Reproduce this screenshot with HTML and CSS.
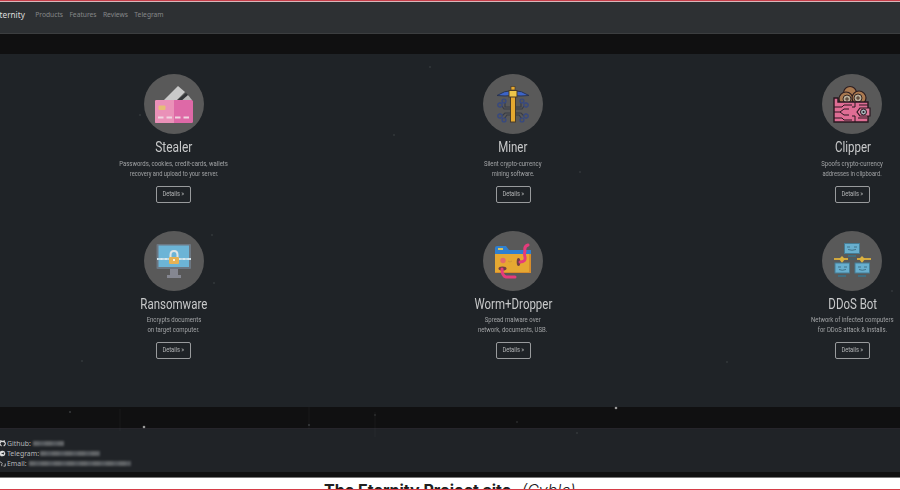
FILE: index.html
```html
<!DOCTYPE html>
<html lang="en">
<head>
<meta charset="utf-8">
<title>Eternity</title>
<link rel="stylesheet" href="styles.css">
</head>
<body>
<div class="frame">
  <nav class="nav"><b class="brand">Eternity</b><a>Products</a><a>Features</a><a>Reviews</a><a>Telegram</a></nav>
  <main class="products">
    <article class="card">
      <svg class="icon" viewBox="0 0 60 60"><circle cx="30" cy="30" r="30"/>
        <path fill="#c9c9c9" d="M18 28 34 12 41 18 31 28z"/><path fill="#333538" d="M31 28 42 19 45 22 39 28z"/><path fill="#b8b8b8" d="M36 28 44 21 48 26 46 28z"/>
        <rect x="11" y="26" width="38" height="23" rx="1.5" fill="#de69a7"/><path fill="#ea91b8" d="M12 26h18v23H12q-1 0-1-1V27z"/>
        <rect x="14.500" y="31.500" width="7" height="4.500" rx="1" fill="#e6bd77"/><path stroke="#f0d4df" stroke-width="1.800" stroke-dasharray="5.500 3" d="M14 43.500h32"/></svg>
      <h2><span class="wide">Stealer</span></h2>
      <p><span class="wide">Passwords, cookies, credit-cards, wallets</span><span>recovery and upload to your server.</span></p>
      <a class="btn"><span>Details »</span></a>
    </article>
    <article class="card">
      <svg class="icon" viewBox="0 0 60 60"><circle cx="30" cy="30" r="30"/>
        <g fill="none" stroke="#383c46" stroke-width="1.200"><path d="M28 33h-6v-4M28 35h-7l-2-3M28 39h-6l-3 3M28 41h-4l-3 4M32 33h6v-4M32 35h7l2-3M32 39h6l3 3M32 41h4l3 4"/></g>
        <g fill="#555" stroke="#354883" stroke-width="1.200"><circle cx="21" cy="27" r="2"/><circle cx="17" cy="31" r="2.200"/><circle cx="17" cy="42" r="2.200"/><circle cx="21" cy="46" r="2"/><circle cx="39" cy="27" r="2"/><circle cx="43" cy="31" r="2.200"/><circle cx="43" cy="42" r="2.200"/><circle cx="39" cy="46" r="2"/></g>
        <path fill="#3c64c8" stroke="#29334f" d="M14 21.500q7-5 16-5t16 5q-8 1-16 0-8 1-16 0z"/>
        <rect x="27.500" y="20" width="5" height="28" fill="#e6a92f" stroke="#493b28"/><rect x="26" y="16.500" width="8" height="6.500" fill="#edc64a" stroke="#493b28"/><rect x="28" y="12.500" width="4" height="3.500" fill="#e6a92f" stroke="#493b28" stroke-width=".7"/></svg>
      <h2><span>Miner</span></h2>
      <p><span class="wide">Silent crypto-currency</span><span>mining software.</span></p>
      <a class="btn"><span>Details »</span></a>
    </article>
    <article class="card">
      <svg class="icon" viewBox="0 0 60 60"><circle cx="30" cy="30" r="30"/>
        <g fill="#a97950" stroke="#2b1c1e" stroke-width="1.200"><circle cx="28" cy="19" r="6.500"/><circle cx="24" cy="25" r="7"/><circle cx="37" cy="24" r="7"/></g><g fill="#b8ad98" stroke="#392923"><circle cx="25" cy="25" r="4"/><circle cx="36" cy="24" r="4"/></g><path stroke="#4b3227" d="M23 25h4M25 23v4M34 24h4M36 22v4"/>
        <path fill="#df6d94" stroke="#28171f" stroke-width="1.400" d="M12 24h4v4h30v20H12z"/>
        <path fill="none" stroke="#28171f" stroke-width="1" d="M12 33h8l2-2h8M12 38h6M12 44h8l2 2h8M18 38l4-3h5M18 38l4 3h5M33 28v5h-3M33 48v-6h-3M37 31h9M36 44h9"/><path fill="#e17c9f" stroke="#28171f" stroke-width="1.200" d="M35 38l3-4h10v8H38z"/><circle cx="41.500" cy="38" r="3" fill="#a6b5bb" stroke="#28171f"/><circle cx="41.500" cy="38" r="1" fill="#28171f"/></svg>
      <h2><span>Clipper</span></h2>
      <p><span class="wide">Spoofs crypto-currency</span><span>addresses in clipboard.</span></p>
      <a class="btn"><span>Details »</span></a>
    </article>
    <article class="card">
      <svg class="icon" viewBox="0 0 60 60"><circle cx="30" cy="30" r="30"/>
        <path fill="#858791" d="M26 37h8v7h3v3H23v-3h3z"/><rect x="12.500" y="13" width="34.500" height="25" rx="1" fill="#6c7782"/><rect x="14.500" y="14.500" width="30.500" height="21.500" fill="#6cb4d6"/>
        <path stroke="#d6e8ef" stroke-width="1.800" d="M13 28h34"/><path stroke="#83b9d1" stroke-width=".6" stroke-dasharray="2.500 2" d="M14 28h32"/><path fill="none" stroke="#dde4e6" stroke-width="2" d="M26.500 27v-3q0-4 3.500-4t3.500 4v3"/><rect x="25" y="26" width="10" height="7" rx="1" fill="#e5b254"/><circle cx="30" cy="29" r="1" fill="#fff"/></svg>
      <h2><span>Ransomware</span></h2>
      <p><span class="wide">Encrypts documents</span><span class="wide">on target computer.</span></p>
      <a class="btn"><span>Details »</span></a>
    </article>
    <article class="card">
      <svg class="icon" viewBox="0 0 60 60"><circle cx="30" cy="30" r="30"/>
        <path fill="#2f7fcf" d="M12 17q0-2 2-2h9l3 4h22v7H12z"/><path fill="#e6a832" d="M12 23h36v19H12z"/><path fill="#d78d2c" d="M46 23h2v19H12v-1h34z"/><rect x="15" y="17" width="5" height="2" fill="#d9c35c"/>
        <circle cx="20" cy="29.500" r="2.700" fill="#e46b68"/><path fill="none" stroke="#cf9838" d="M25 30q2 2 4 0"/><ellipse cx="19.500" cy="37.500" rx="4" ry="2" fill="#703f44"/><ellipse cx="35.500" cy="31" rx="1.800" ry="4" fill="#703f44"/>
        <g fill="none" stroke="#e53b7c" stroke-linecap="round" stroke-width="3"><path d="M37 31q6 0 5-5-1-3 0-6-1-5 3-6"/><path d="M19 38q0 7 4 8h9"/></g></svg>
      <h2><span>Worm+Dropper</span></h2>
      <p><span class="wide">Spread malware over</span><span class="wide">network, documents, USB.</span></p>
      <a class="btn"><span>Details »</span></a>
    </article>
    <article class="card">
      <svg class="icon" viewBox="0 0 60 60"><circle cx="30" cy="30" r="30"/>
        <path stroke="#d1a83f" stroke-width="2" d="M12 28h14M35 28h14"/><path stroke="#3f6573" d="M27 28h7"/><path fill="#dbb13f" d="m20 25 3 3-3 4-3-4zm20 0 3 3-3 4-3-4z"/>
        <g fill="#68afcf" stroke="#467c94"><rect x="22.500" y="12.500" width="15" height="10"/><rect x="13" y="32" width="14.500" height="10"/><rect x="33" y="32" width="14.500" height="10"/></g>
        <g fill="none" stroke="#41738a"><path d="M25 16h3M32 16h3M26 18.500q4 1.500 8 0M16 36h3M22 36h3M17 38.500q3 1.500 7 0M36 36h3M42 36h3M37 38.500q3 1.500 7 0"/></g><path stroke="#37758e" stroke-width="1.500" d="M26 25h8M16 45h8M36 45h8"/></svg>
      <h2><span>DDoS Bot</span></h2>
      <p><span class="wide">Network of infected computers</span><span class="wide">for DDoS attack &amp; installs.</span></p>
      <a class="btn"><span>Details »</span></a>
    </article>
  </main>
  <footer class="footer">
    <div><svg viewBox="0 0 8 8"><path fill="none" stroke="#ddd" stroke-width="1.200" d="M1.800 6.800C-1.500 5 0 1 3 1.500c3-.5 4.500 3.500 1.200 5.300M.8 3V1l2 1 2-1v2"/></svg><span>Github:</span><i class="redact github"></i></div>
    <div><svg viewBox="0 0 8 8"><circle cx="2.800" cy="4" r="3.200" fill="#ddd"/><path fill="#24282b" d="m1 4 4-1.500L4 5.500 3 4.700z"/></svg><span>Telegram:</span><i class="redact telegram"></i></div>
    <div><svg viewBox="0 0 8 8"><path fill="none" stroke="#bbb" d="M0 2l3 2M2 7V4.500M4 7h2V4"/></svg><span>Email:</span><i class="redact email"></i></div>
  </footer>
  <svg class="particles" viewBox="0 0 900 490" fill="#62666a"><circle cx="144" cy="427" r="1.300" fill="#999"/><circle cx="616" cy="408" r="1.300" fill="#999"/><g opacity=".5"><circle cx="70" cy="412" r="1"/><circle cx="309" cy="425" r="1"/><circle cx="375" cy="415" r=".8"/><circle cx="517" cy="422" r=".8"/><circle cx="577" cy="433" r=".8"/><circle cx="394" cy="135" r=".8"/><circle cx="140" cy="115" r=".8"/><circle cx="580" cy="172" r=".8"/><circle cx="430" cy="67" r=".8"/><circle cx="212" cy="235" r=".8"/><circle cx="214" cy="283" r=".8"/><circle cx="892" cy="291" r=".8"/><circle cx="82" cy="361" r=".8"/><circle cx="727" cy="362" r=".8"/></g><path stroke="#53575b" opacity=".12" d="M120 409v22M309 407v22M375 412v25"/></svg>
</div>
<div class="caption"><strong>The Eternity Project site.</strong><em>(Cyble)</em></div>
</body>
</html>
```
FILE: styles.css
```css
* { box-sizing: border-box; }
body { margin: 0; width: 900px; height: 490px; overflow: hidden; background: #fff; border-top: 1px solid #c63d49; font-family: Roboto, sans-serif; }
.frame { position: relative; height: 477px; border-top: 1px solid #d8b5b9; background: #101011; border-bottom: 1px solid #777; overflow: hidden; }
.nav { display: flex; align-items: center; gap: 6.4px; height: 32px; padding-bottom: 6px; background: #2d3033; border-bottom: 1px solid #3c3e40; font: 6.7px "Noto Sans", sans-serif; color: #858789; }
.brand { margin-left: -5px; margin-right: 4px; font-size: 8.2px; font-weight: 400; color: #dedede; }
.products { margin-top: 20px; margin-right: -122px; padding: 20px 0 0 4px; height: 353px; background: #1f2327; display: grid; grid-template-columns: repeat(3, 339.4px); grid-template-rows: 156.5px 156.5px; }
.card { display: flex; flex-direction: column; align-items: center; color: #bfc1c2; }
.icon { width: 60px; height: 60px; flex-shrink: 0; filter: blur(.4px); }
.icon > circle:first-child { fill: #595959; }
h2 { margin: 5px 0 0; font-size: 14px; font-weight: 400; line-height: 17px; color: #c8c9ca; white-space: nowrap; }
h2 span, p span, .btn span { display: inline-block; transform: scaleX(.82); }
h2 .wide, p .wide { transform: scaleX(.855); }
p { margin: 2.5px 0 0; display: flex; flex-direction: column; align-items: center; font-size: 7px; line-height: 10.3px; white-space: nowrap; color: #a2a4a6; }
.btn { margin-top: 6.5px; width: 35px; height: 17px; border: 1px solid #999b9d; border-radius: 2px; text-align: center; font-size: 7px; line-height: 15px; color: #b5b7b8; white-space: nowrap; }
.footer { margin-top: 21px; padding-top: 9px; height: 44px; background: #202327; border-top: 1px solid #26252b; font: 6.9px "Noto Sans", sans-serif; color: #b5b7b9; }
.footer div { height: 10.4px; display: flex; align-items: center; }
.footer svg { width: 7px; height: 7px; }
.redact { height: 5px; margin-left: 2px; background: repeating-linear-gradient(90deg, #707376 0 5px, #606468 7px 11px, #707376 13px); filter: blur(1px); opacity: .8; }
.github { width: 31px; }
.telegram { width: 60px; margin-left: 1px; }
.email { width: 102px; }
.particles { position: absolute; left: 0; top: -2px; width: 900px; height: 490px; }
.caption { height: 12px; padding: 3px 0 0 324px; display: flex; gap: 5px; overflow: hidden; border-bottom: 1px solid #d63c46; font: 16px/18px Inter, sans-serif; color: #202020; white-space: nowrap; }
.caption strong { font-weight: 700; }
.caption em { font-weight: 300; }
```
